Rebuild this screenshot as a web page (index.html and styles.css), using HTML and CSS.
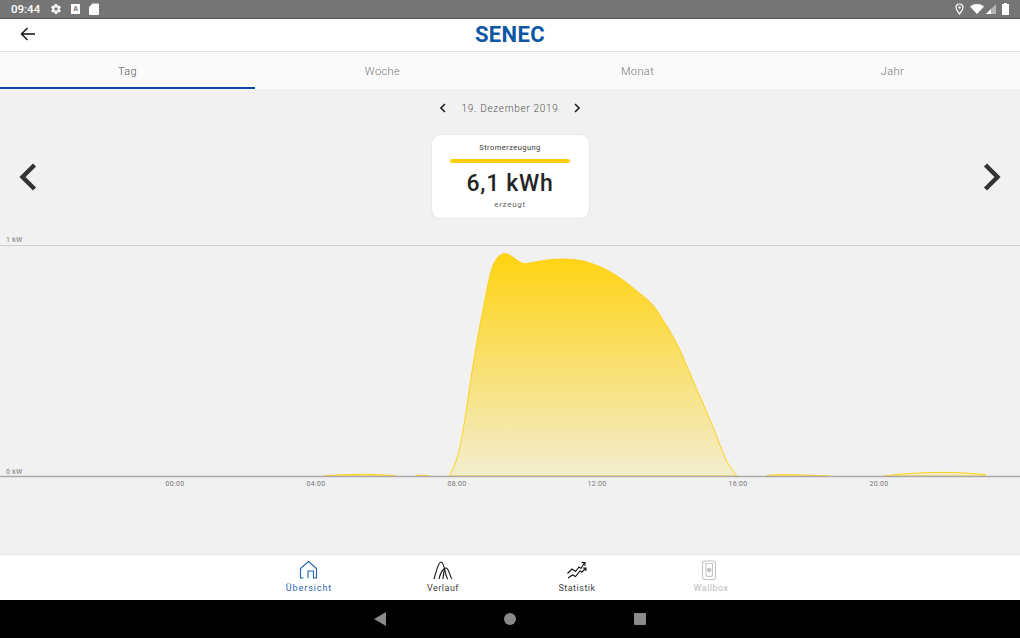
FILE: index.html
```html
<!DOCTYPE html>
<html lang="de">
<head>
    <meta charset="UTF-8">
    <meta name="viewport" content="width=device-width, initial-scale=1.0">
    <title>SENEC - Stromerzeugung</title>
    <link rel="stylesheet" href="styles.css">
</head>
<body>
    <div class="statusbar">
        <div class="status-left">
            <span class="clock">09:44</span>
            <svg class="ic" width="12" height="12" viewBox="0 0 24 24"><path fill="#fff" d="M19.4 13a7.5 7.5 0 0 0 0-2l2.1-1.6a.5.5 0 0 0 .1-.6l-2-3.5a.5.5 0 0 0-.6-.2l-2.5 1a7.300 7.300 0 0 0-1.700-1l-.4-2.700a.5.5 0 0 0-.5-.4h-4a.5.5 0 0 0-.5.4l-.4 2.700a7.300 7.300 0 0 0-1.700 1l-2.500-1a.5.5 0 0 0-.6.2l-2 3.500a.5.5 0 0 0 .1.6L4.600 11a7.500 7.500 0 0 0 0 2l-2.100 1.600a.5.5 0 0 0-.1.6l2 3.500a.5.5 0 0 0 .6.2l2.500-1a7.300 7.300 0 0 0 1.700 1l.4 2.700a.5.5 0 0 0 .5.4h4a.5.5 0 0 0 .5-.4l.4-2.700a7.300 7.300 0 0 0 1.700-1l2.500 1a.5.5 0 0 0 .6-.2l2-3.500a.5.5 0 0 0-.1-.6zM12 15.500a3.500 3.500 0 1 1 0-7 3.500 3.500 0 0 1 0 7z"/></svg>
            <span class="abox">A</span>
            <svg class="ic" width="10" height="12" viewBox="0 0 10 12"><path fill="#fff" d="M3.500 0.500H9a1 1 0 0 1 1 1V11a1 1 0 0 1-1 1H1a1 1 0 0 1-1-1V4z"/></svg>
        </div>
        <div class="status-right">
            <svg width="9" height="12" viewBox="0 0 9 12"><path fill="none" stroke="#fff" stroke-width="1.200" d="M4.500 11C2.800 8.600 1 6.700 1 4.500a3.500 3.500 0 0 1 7 0C8 6.700 6.200 8.600 4.500 11z"/><circle cx="4.500" cy="4.500" r="1.200" fill="#fff"/></svg>
            <svg class="wifi" width="14" height="10" viewBox="0 0 14 10"><path fill="#fff" d="M0 2.500C4 -.8 10 -.8 14 2.500L7 10z"/></svg>
            <svg class="signal" width="10" height="10" viewBox="0 0 10 10"><path fill="#b5b5b5" d="M0 10L10 0V10z"/><path fill="#fff" d="M0 10L5 5V10z"/></svg>
            <svg width="7" height="12" viewBox="0 0 7 12"><path fill="#fff" d="M2 0H5V1H6.500A.5.5 0 0 1 7 1.500V12H0V1.500A.5.5 0 0 1 .5 1H2z"/></svg>
        </div>
    </div>

    <header class="appbar">
        <svg class="back" width="16" height="14" viewBox="0 0 16 14"><path fill="none" stroke="#111" stroke-width="1.400" d="M15 7H1.500M7.500 1L1.500 7l6 6"/></svg>
        <span class="logo">SENEC</span>
    </header>

    <nav class="tabs">
        <a class="tab active">Tag</a>
        <a class="tab">Woche</a>
        <a class="tab">Monat</a>
        <a class="tab">Jahr</a>
    </nav>

    <main class="content">
        <div class="date-row">
            <svg width="6" height="10" viewBox="0 0 6 10"><path class="chev" d="M5 1L1 5l4 4"/></svg>
            <span class="date">19. Dezember 2019</span>
            <svg width="6" height="10" viewBox="0 0 6 10"><path class="chev" d="M1 1l4 4-4 4"/></svg>
        </div>

        <div class="summary-row">
            <svg width="18" height="28" viewBox="0 0 18 28"><path class="big-chev" d="M15.500 2L3.500 14l12 12"/></svg>
            <div class="card">
                <div class="card-title">Stromerzeugung</div>
                <div class="card-bar"></div>
                <div class="card-value">6,1 kWh</div>
                <div class="card-sub">erzeugt</div>
            </div>
            <svg width="18" height="28" viewBox="0 0 18 28"><path class="big-chev" d="M2.500 2l12 12-12 12"/></svg>
        </div>

        <svg class="chart" width="1020" height="260" viewBox="0 235 1020 260">
            <defs>
                <linearGradient id="sun" gradientUnits="userSpaceOnUse" x1="0" y1="254" x2="0" y2="476">
                    <stop offset="0" stop-color="#ffd310"/>
                    <stop offset="1" stop-color="#f3edcf"/>
                </linearGradient>
            </defs>
            <line class="grid" x1="0" y1="245.500" x2="1020" y2="245.500"/>
            <text class="axis" x="6" y="242">1 kW</text>
            <text class="axis" x="6" y="474">0 kW</text>

            <path class="area" d="M449 476C453 470 456 462 458 455C462 440 466 412 470 385C473 365 477 340 481 320C485 300 488 281 492 268C495 259 500 253.500 505 253.500C512 254 518 264 526 263.700C536 262 548 259 560 259C572 259 582 260 590 263C602 267 612 272 623 280C632 287 641 294 650 302C655 307 659 313 663 320C669 329 675 340 680 350C686 363 691 377 697 390C702 400 706 411 710 420C715 431 719 443 723 453C727 463 732 470 737 476Z"/>
            <path class="area" d="M324 476C345 474 375 473.500 396 476Z"/>
            <path class="area" d="M415 476C420 475 425 475 430 476Z"/>
            <path class="area" d="M766 476C772 473.500 800 475 830 476Z"/>
            <path class="area" d="M884 476C915 472 950 471 985 474.500V476Z"/>

            <line class="baseline" x1="0" y1="476.500" x2="1020" y2="476.500"/>
            <text class="axis tick" x="175" y="486">00:00</text>
            <text class="axis tick" x="316" y="486">04:00</text>
            <text class="axis tick" x="457" y="486">08:00</text>
            <text class="axis tick" x="597" y="486">12:00</text>
            <text class="axis tick" x="738" y="486">16:00</text>
            <text class="axis tick" x="879" y="486">20:00</text>
        </svg>
    </main>

    <nav class="bottomnav">
        <a class="nav-item active">
            <svg width="20" height="20" viewBox="0 0 20 20"><path d="M4.500 18H1.500V8.500L9.500 1.500l8 7V18h-3V11H9V18"/></svg>
            <span>Übersicht</span>
        </a>
        <a class="nav-item">
            <svg width="20" height="20" viewBox="0 0 20 20"><path d="M1 19C3 13 5 2 8 2C11 2 11.500 10 13 15C13.800 17.500 14.500 19 15 19"/><path d="M6 19C7 14 10 8 13 8C16 8 16.500 16 19 19"/><path d="M10 19C10.300 16 10.500 13 11.500 9"/></svg>
            <span>Verlauf</span>
        </a>
        <a class="nav-item">
            <svg width="20" height="20" viewBox="0 0 20 20"><path d="M0.500 13.500L5 9l3.500 2.500L12 7l2 1.500L17.500 2.500M14.500 2.500h3.500v3.500"/><path d="M1 18L5.500 15l3 1.500L13 11l2 1 3.500-3.500M16 8h3v3"/></svg>
            <span>Statistik</span>
        </a>
        <a class="nav-item disabled">
            <svg width="20" height="20" viewBox="0 0 20 20"><rect x="1.500" y="1" width="13" height="18.500" rx="2.500"/><path d="M5 3.500h6.500v11a2 2 0 0 1-2 2H7a2 2 0 0 1-2-2z"/><circle cx="8.200" cy="10" r="1.800" fill="#c4c4c4"/></svg>
            <span>Wallbox</span>
        </a>
    </nav>

    <div class="sysnav">
        <svg width="12" height="14" viewBox="0 0 12 14"><path fill="#8a8a8a" d="M12 0V14L0 7z"/></svg>
        <svg width="12" height="12" viewBox="0 0 12 12"><circle cx="6" cy="6" r="6" fill="#8a8a8a"/></svg>
        <svg width="12" height="12" viewBox="0 0 12 12"><rect width="12" height="12" rx="1" fill="#8a8a8a"/></svg>
    </div>
</body>
</html>
```

FILE: styles.css
```css
* { box-sizing: border-box; }
body { margin: 0; width: 1020px; height: 638px; overflow: hidden; display: flex; flex-direction: column; font-family: Roboto, "Liberation Sans", sans-serif; background: #f1f1f1; color: #333; }

.statusbar { height: 19px; flex: none; background: #757575; border-bottom: 1px solid #555; display: flex; justify-content: space-between; align-items: center; padding: 0 11px; color: #fff; }
.status-left { display: flex; align-items: center; gap: 9px; }
.clock { font-size: 11.500px; font-weight: 500; margin-right: 1px; }
.abox { width: 9px; height: 10px; background: #fff; color: #757575; font-size: 7px; font-weight: 700; line-height: 10px; text-align: center; }
.status-right { display: flex; align-items: center; gap: 5px; }
.wifi { margin-right: 1px; margin-left: 1px; }
.signal { margin-left: -4px; margin-right: 1px; }

.appbar { height: 33px; flex: none; background: #fff; border-bottom: 1px solid #e2e2e2; display: flex; align-items: center; justify-content: center; position: relative; }
.back { position: absolute; left: 20px; top: 8px; }
.logo { font-family: Roboto, sans-serif; font-weight: 700; font-size: 22px; letter-spacing: .4px; color: #0f57a5; line-height: 1; }

.tabs { height: 37px; flex: none; background: #fafafa; display: grid; grid-template-columns: repeat(4, 1fr); }
.tab { font-size: 11px; font-weight: 300; letter-spacing: .4px; color: #777; display: flex; align-items: center; justify-content: center; padding-top: 2px; }
.tab.active { color: #555; box-shadow: inset 0 -2px 0 #0d47a8; }

.content { flex: 1; display: flex; flex-direction: column; background: #f1f1f1; border-bottom: 1px solid #e6e6e6; }
.date-row { height: 38px; flex: none; display: flex; align-items: center; justify-content: center; gap: 8px; }
.date { width: 112px; text-align: center; font-size: 10px; font-weight: 300; letter-spacing: .7px; color: #555; white-space: nowrap; }
.chev { fill: none; stroke: #222; stroke-width: 1.600; }

.summary-row { display: flex; align-items: center; justify-content: space-between; padding: 0 19px; margin-top: 7px; }
.big-chev { fill: none; stroke: #333; stroke-width: 4.400; }
.card { width: 159px; height: 85px; background: #fff; border: 1px solid #e8e8e8; border-radius: 10px; display: flex; flex-direction: column; align-items: center; padding-top: 8px; }
.card-title { font-size: 7.500px; line-height: 10px; letter-spacing: .45px; color: #333; }
.card-bar { width: 120px; height: 4px; border-radius: 2px; background: #ffcf06; margin-top: 6px; }
.card-value { font-size: 23px; font-weight: 500; line-height: 28px; letter-spacing: .7px; color: #262626; margin-top: 7px; }
.card-sub { font-size: 8px; line-height: 10px; letter-spacing: .7px; color: #666; margin-top: 2px; }

.chart { display: block; margin-top: 16px; }
.grid { stroke: #cfcfcf; stroke-width: 1; }
.baseline { stroke: #aaa; stroke-width: 1.500; }
.area { fill: url(#sun); stroke: #ffd21c; stroke-width: 1; }
.axis { font-size: 7px; letter-spacing: .3px; fill: #777; }
.tick { text-anchor: middle; }

.bottomnav { height: 45px; flex: none; background: #fff; display: flex; justify-content: center; }
.nav-item { width: 134px; display: flex; flex-direction: column; align-items: center; padding-top: 5px; font-size: 9px; letter-spacing: .5px; color: #444; line-height: 11px; }
.nav-item svg { fill: none; stroke: #111; stroke-width: 1.100; margin-bottom: 3px; }
.nav-item.active { color: #2f68b3; letter-spacing: .9px; }
.nav-item.active svg { stroke: #1f62b5; }
.nav-item.disabled { color: #bbb; }
.nav-item.disabled svg { stroke: #c4c4c4; }

.sysnav { height: 38px; flex: none; background: #000; display: flex; align-items: center; justify-content: center; gap: 118px; }
```
